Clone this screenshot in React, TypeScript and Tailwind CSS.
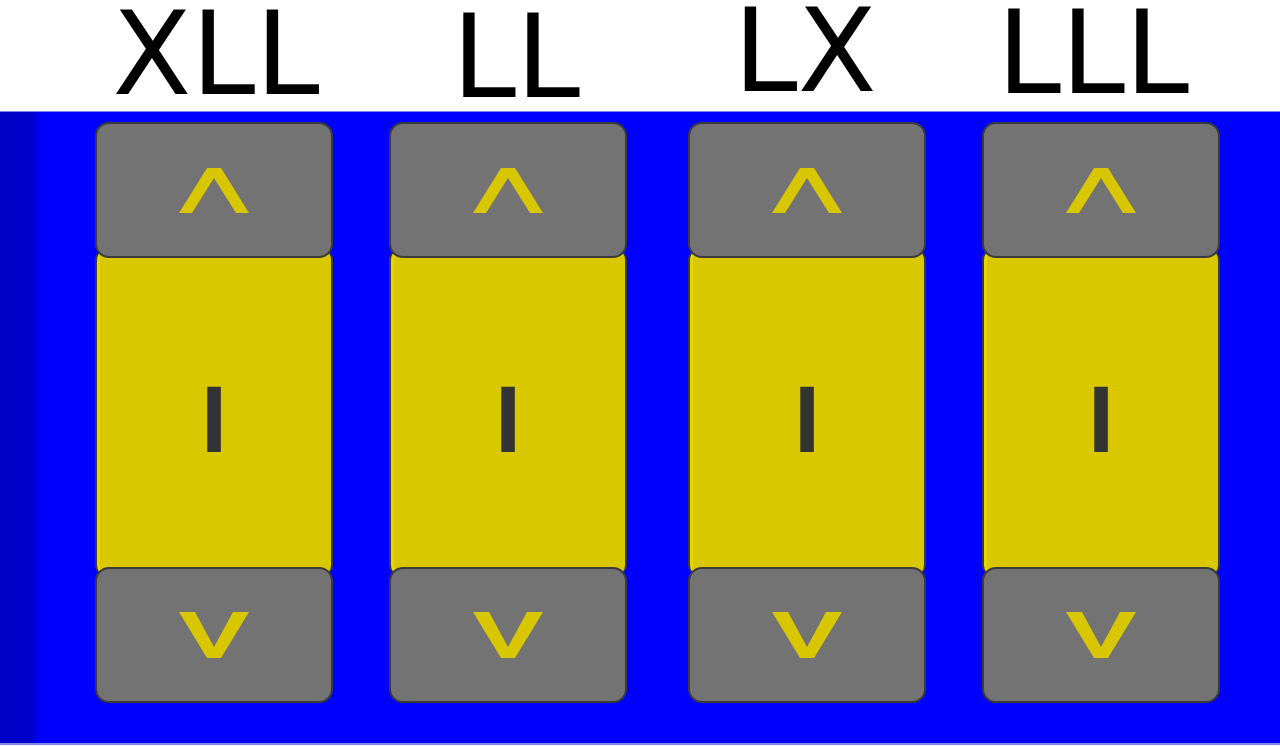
const columns = [
  { label: "XLL", labelPad: "pl-[4px]", labelTop: "mt-[8px]", gap: "ml-0" },
  { label: "LL", labelPad: "pl-[16px]", labelTop: "mt-[11px]", gap: "ml-[56px]" },
  { label: "LX", labelPad: "pr-[4px]", labelTop: "mt-[5px]", gap: "ml-[61px]" },
  { label: "LLL", labelPad: "pr-[16px]", labelTop: "mt-[7px]", gap: "ml-[56px]" },
];

function CaretUp() {
  return (
    <svg width="70" height="45" viewBox="0 0 70 45">
      <polygon points="0,45 28,0 42,0 70,45 57,45 35,10 13,45" fill="#d8c700" />
    </svg>
  );
}

function CaretDown() {
  return (
    <svg width="70" height="46" viewBox="0 0 70 46">
      <polygon points="0,0 16,0 35,35 54,0 70,0 42,46 28,46" fill="#d8c700" />
    </svg>
  );
}

function Stepper() {
  return (
    <div className="flex w-[238px] flex-col">
      <button className="relative z-10 flex h-[136px] items-center justify-center rounded-[14px] border-2 border-[#3b3b3b] bg-[#737373]">
        <CaretUp />
      </button>
      <div className="-my-[8px] flex h-[325px] items-center justify-center rounded-[10px] border-x-2 border-[#3b3b3b] bg-[#d9c800] shadow-[inset_3px_0_0_#e6d500]">
        <span className="mt-[14px] font-['Liberation_Sans',sans-serif] text-[94px] font-bold leading-none text-[#333333]">
          I
        </span>
      </div>
      <button className="relative z-10 flex h-[136px] items-center justify-center rounded-[14px] border-2 border-[#3b3b3b] bg-[#737373]">
        <CaretDown />
      </button>
    </div>
  );
}

export default function App() {
  return (
    <div className="flex h-[746px] w-[1280px] flex-col overflow-hidden bg-white">
      <div className="flex h-[111px] pl-[95px]">
        {columns.map((c) => (
          <div key={c.label} className={`w-[238px] ${c.gap}`}>
            <div
              className={`${c.labelPad} ${c.labelTop} text-center font-['DejaVu_Sans',sans-serif] text-[115px] leading-[92px] text-black`}
            >
              {c.label}
            </div>
          </div>
        ))}
      </div>
      <div className="flex h-[634px] border-t border-b-2 border-[#8088e6] bg-[#0000ff]">
        <div className="w-[42px] shrink-0 bg-gradient-to-r from-[#0000c8] from-70% to-[#0000ff]" />
        <div className="flex pl-[53px] pt-[10px]">
          {columns.map((c) => (
            <div key={c.label} className={c.gap}>
              <Stepper />
            </div>
          ))}
        </div>
      </div>
    </div>
  );
}
